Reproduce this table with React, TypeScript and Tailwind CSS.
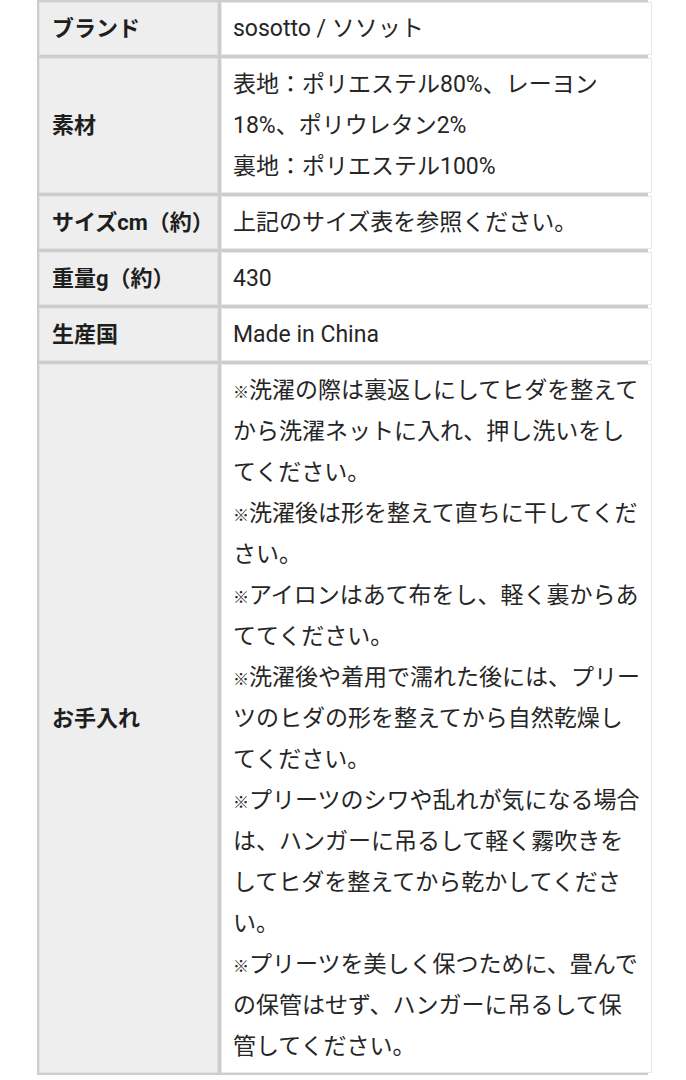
const rows: { label: string; lines: string[] }[] = [
  { label: "ブランド", lines: ["sosotto / ソソット"] },
  {
    label: "素材",
    lines: ["表地：ポリエステル80%、レーヨン", "18%、ポリウレタン2%", "裏地：ポリエステル100%"],
  },
  { label: "サイズcm（約）", lines: ["上記のサイズ表を参照ください。"] },
  { label: "重量g（約）", lines: ["430"] },
  { label: "生産国", lines: ["Made in China"] },
  {
    label: "お手入れ",
    lines: [
      "※洗濯の際は裏返しにしてヒダを整えて",
      "から洗濯ネットに入れ、押し洗いをし",
      "てください。",
      "※洗濯後は形を整えて直ちに干してくだ",
      "さい。",
      "※アイロンはあて布をし、軽く裏からあ",
      "ててください。",
      "※洗濯後や着用で濡れた後には、プリー",
      "ツのヒダの形を整えてから自然乾燥し",
      "てください。",
      "※プリーツのシワや乱れが気になる場合",
      "は、ハンガーに吊るして軽く霧吹きを",
      "してヒダを整えてから乾かしてくださ",
      "い。",
      "※プリーツを美しく保つために、畳んで",
      "の保管はせず、ハンガーに吊るして保",
      "管してください。",
    ],
  },
]

// the reference mark renders narrow and small on the source device
function Line({ text }: { text: string }) {
  if (text.startsWith("※")) {
    return (
      <span className="block h-[41px] whitespace-nowrap">
        <span className="inline-block text-[16px] leading-none">※</span>
        {text.slice(1)}
      </span>
    )
  }
  return <span className="block whitespace-nowrap">{text}</span>
}

export default function App() {
  return (
    <div
      className="min-h-[1080px] w-[686px] bg-white"
      style={{ fontFamily: 'Roboto, "Noto Sans CJK JP", sans-serif' }}
    >
      {/* spec table */}
      <div className="ml-[37px] grid w-[611px] grid-cols-[179px_1fr] gap-[3px] bg-[#cdcdcd] p-[2px]">
        {rows.map((row) => (
          <div key={row.label} className="contents">
            <div className="flex items-center border border-[#e2e2e2] bg-[#eeeeee] px-[12px] py-[5px] text-[22px] font-bold leading-[41px] text-[#1e1e1e]">
              {row.label}
            </div>
            <div className="border border-[#e8e8e8] bg-white px-[11px] py-[5px] text-[23px] leading-[41px] text-[#262626]">
              {row.lines.map((line, i) => (
                <Line key={i} text={line} />
              ))}
            </div>
          </div>
        ))}
      </div>
    </div>
  )
}
